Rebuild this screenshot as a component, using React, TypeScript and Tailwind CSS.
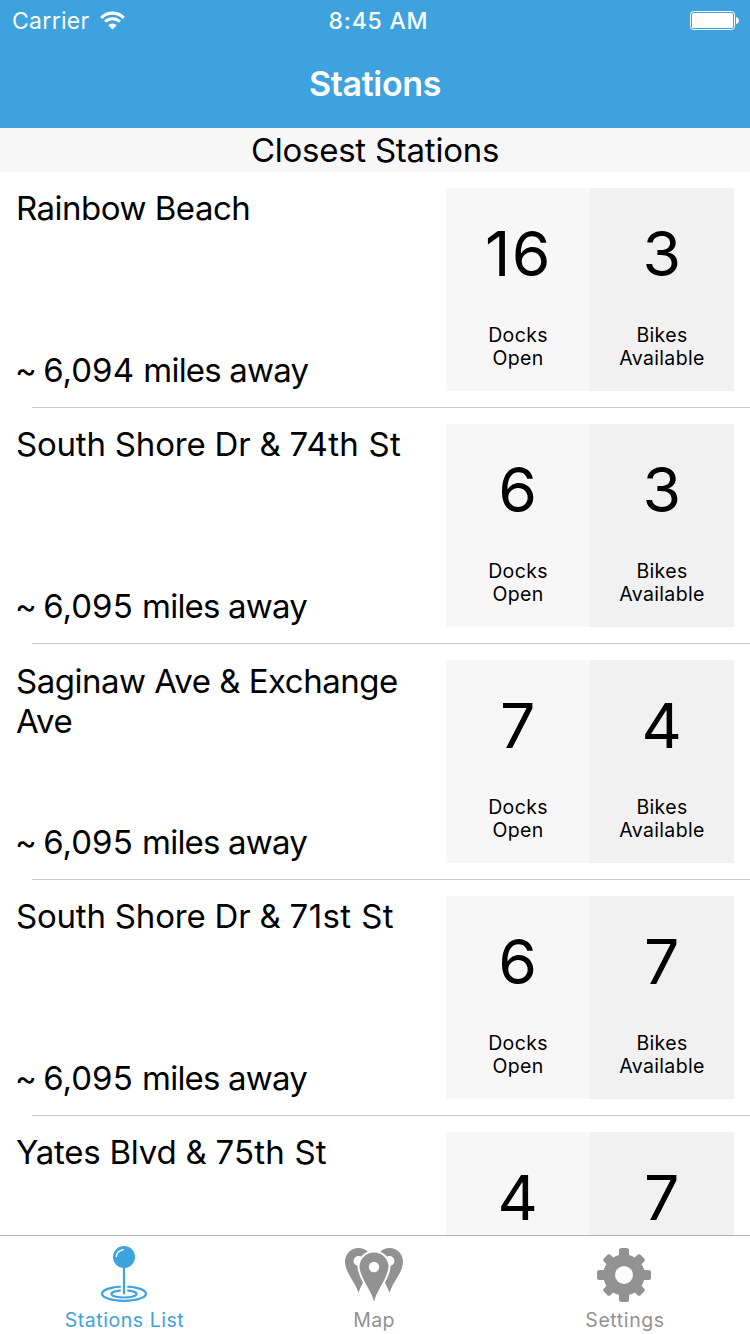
type Station = {
  name: string;
  street?: string;
  miles?: string;
  docks: number;
  bikes: number;
  nameTracking: string;
  streetTracking?: string;
};

const stations: Station[] = [
  { name: 'Rainbow Beach', miles: '6,094', docks: 16, bikes: 3, nameTracking: 'tracking-[-0.5px]' },
  {
    name: 'South Shore Dr & ',
    street: '74th St',
    miles: '6,095',
    docks: 6,
    bikes: 3,
    nameTracking: 'tracking-[-0.2px]',
    streetTracking: 'tracking-[0.25px]',
  },
  { name: 'Saginaw Ave & Exchange Ave', miles: '6,095', docks: 7, bikes: 4, nameTracking: 'tracking-[-0.5px] pt-px' },
  {
    name: 'South Shore Dr & ',
    street: '71st St',
    miles: '6,095',
    docks: 6,
    bikes: 7,
    nameTracking: 'tracking-[-0.2px]',
    streetTracking: 'tracking-[0.4px]',
  },
  {
    name: 'Yates Blvd & ',
    street: '75th St',
    docks: 4,
    bikes: 7,
    nameTracking: 'tracking-[-0.25px]',
    streetTracking: 'tracking-[0.2px]',
  },
];

function StatusBar() {
  return (
    <div className="grid h-10 grid-cols-3 items-start">
      <div className="flex items-center pl-3">
        <span className="text-[23px] leading-[42px] tracking-[0.3px]">Carrier</span>
        <svg className="-mt-px ml-[10.5px]" width="25" height="20" viewBox="0 0 26 20" fill="none" stroke="white">
          <path d="M1.3 6.7a16.5 16.5 0 0 1 23.4 0" strokeWidth="3.300" />
          <path d="M5.3 10.8a10.9 10.9 0 0 1 15.4 0" strokeWidth="3" />
          <path d="M13 18.900l-4.400-4.400a6.200 6.200 0 0 1 8.800 0z" fill="white" stroke="none" />
        </svg>
      </div>
      <div className="pl-[7px] text-center text-[23px] leading-[42px] font-medium tracking-[0.8px]">8:45 AM</div>
      <div className="flex justify-end pt-[11px] pr-[11px]">
        <svg width="49" height="19" viewBox="0 0 49 19">
          <rect x="0.5" y="0.5" width="44" height="18" rx="3" fill="none" stroke="white" />
          <rect x="2" y="2" width="41" height="15" rx="1.5" fill="white" />
          <path d="M46 6c1.7.3 3 1.7 3 3.5S47.700 12.700 46 13z" fill="white" />
        </svg>
      </div>
    </div>
  );
}

type CountProps = { value: number; top?: string; bottom?: string; className: string };

function Count({ value, top, bottom, className }: CountProps) {
  return (
    <div className={`flex w-36 flex-col items-center ${className}`}>
      <div className="mt-[26px] pl-px text-[62.5px] leading-[78px] tracking-[1.5px]">{value}</div>
      {top && (
        <div className="mt-8 text-center text-[19.5px] leading-[23px] tracking-[0.35px]">
          {top}
          <br />
          {bottom}
        </div>
      )}
    </div>
  );
}

function Row({ station }: { station: Station }) {
  const full = station.miles !== undefined;
  return (
    <div className="flex h-[236px] shrink-0 flex-col">
      <div className="flex h-[235px] justify-between p-4">
        <div className="flex w-[410px] flex-col justify-between">
          <div className={`text-[33px] leading-10 ${station.nameTracking}`}>
            {station.name}
            {station.street && <span className={station.streetTracking}>{station.street}</span>}
          </div>
          {full && (
            <div className="pb-px text-[33px] leading-10 tracking-[-0.8px]">
              <span className="-ml-px tracking-[-1.5px]">~ </span>
              <span className="tracking-[0.05px]">{station.miles} </span>
              miles away
            </div>
          )}
        </div>
        <div className="flex h-[203px]">
          <Count value={station.docks} top={full ? 'Docks' : undefined} bottom="Open" className="bg-[#f7f7f7]" />
          <Count value={station.bikes} top={full ? 'Bikes' : undefined} bottom="Available" className="bg-[#f1f1f1]" />
        </div>
      </div>
      <div className="ml-8 h-px bg-[#c8c7cc]" />
    </div>
  );
}

function PinIcon() {
  return (
    <svg width="60" height="60" viewBox="0 0 60 60" fill="none" stroke="#3da2dd">
      <ellipse cx="30" cy="49.700" rx="22" ry="7.200" strokeWidth="2.200" />
      <ellipse cx="30" cy="49.900" rx="12.500" ry="3.600" strokeWidth="2.200" />
      <path d="M30 38v13" stroke="white" strokeWidth="6.500" />
      <path d="M30 22v28.300" strokeWidth="2.200" />
      <circle cx="30" cy="13" r="11" fill="#3da2dd" stroke="none" />
      <path d="M22.300 12.500c.5-3.700 3-6 6.800-6.700" stroke="white" strokeWidth="1.500" strokeLinecap="round" />
    </svg>
  );
}

function MapIcon() {
  const side = 'M14.500 4C7 4 1 10 1 17.500C1 28 11 38 14 47.500Q14.500 49 15 47.500C18 38 28 28 28 17.500C28 10 22 4 14.500 4z';
  return (
    <svg width="60" height="60" viewBox="0 0 60 60" fill="#929292">
      <path d={side} />
      <path d={side} transform="translate(60 0) scale(-1 1)" />
      <circle cx="14.500" cy="17" r="4.900" fill="white" />
      <circle cx="45.500" cy="17" r="4.900" fill="white" />
      <path
        d="M30 7.500C21.400 7.500 14.500 14.300 14.500 22.700C14.500 33.500 26 46 28.800 57Q30 60.500 31.200 57C34 46 45.500 33.500 45.500 22.700C45.500 14.300 38.600 7.500 30 7.500z"
        stroke="white"
        strokeWidth="2"
      />
      <circle cx="30" cy="23" r="5.200" fill="white" />
    </svg>
  );
}

function GearIcon() {
  return (
    <svg width="60" height="60" viewBox="0 0 60 60" fill="#929292">
      {[0, 90].map((angle) => (
        <rect key={angle} x="25" y="4" width="10" height="54" rx="2.500" transform={`rotate(${angle} 30 31)`} />
      ))}
      {[45, 135].map((angle) => (
        <rect key={angle} x="25.300" y="5" width="9.400" height="52" rx="2.500" transform={`rotate(${angle} 30 31)`} />
      ))}
      <circle cx="30" cy="31" r="20.700" />
      <circle cx="30" cy="31" r="9" fill="white" />
    </svg>
  );
}

export default function App() {
  return (
    <div className="flex h-[1334px] w-[750px] flex-col overflow-hidden bg-white font-[Inter,sans-serif] text-black">
      <header className="h-32 shrink-0 bg-[#3da2dd] text-white">
        <StatusBar />
        <h1 className="text-center text-[34px] leading-[88px] font-semibold tracking-[-0.35px]">Stations</h1>
      </header>
      <h2 className="h-11 shrink-0 bg-[#f7f7f7] text-center text-[33px] leading-[45px] tracking-[-0.25px]">Closest Stations</h2>
      <main className="flex min-h-0 flex-1 flex-col overflow-hidden">
        {stations.map((station) => (
          <Row key={station.name + station.street} station={station} />
        ))}
      </main>
      <nav className="grid h-[99px] shrink-0 grid-cols-[248px_252px_248px] justify-items-center border-t border-[#b2b2b2] bg-white pt-2 text-[19.5px] leading-6 tracking-[0.55px] text-[#929292]">
        <div className="flex flex-col items-center text-[#3da2dd]">
          <PinIcon />
          <span className="mt-1 pl-px">Stations List</span>
        </div>
        <div className="flex flex-col items-center">
          <MapIcon />
          <span className="mt-1 tracking-[0.3px]">Map</span>
        </div>
        <div className="flex flex-col items-center">
          <GearIcon />
          <span className="mt-1 pl-0.5 tracking-[0.6px]">Settings</span>
        </div>
      </nav>
    </div>
  );
}
